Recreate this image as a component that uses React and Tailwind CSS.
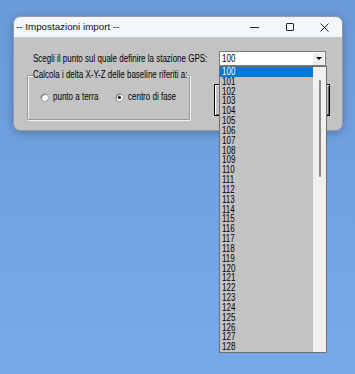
import React from 'react';

const items = Array.from({ length: 29 }, (_, i) => String(100 + i));

// classic dialogs here use a narrow sans; squeeze Liberation Sans to match
const T = ({ children }) => (
    <span className="inline-block whitespace-nowrap origin-left scale-x-[0.8]">{children}</span>
);

const Radio = ({ checked, label }) => (
    <div className="w-[75px] flex items-center gap-[4px]">
        <div className="w-[9px] h-[9px] shrink-0 rounded-full bg-white border border-[#9a9a9a] shadow-[inset_1px_1px_0_#7a7a7a] flex items-center justify-center">
            {checked && <div className="w-[3px] h-[3px] rounded-full bg-black" />}
        </div>
        <T>{label}</T>
    </div>
);

export default function App() {
    return (
        <div className="relative w-[355px] h-[374px] overflow-hidden bg-gradient-to-b from-[#6a9ad8] to-[#78a9e8] font-['Liberation_Sans',Arial,sans-serif] text-[10px] leading-[12px] text-black">
            {/* dialog window */}
            <div className="absolute left-[13px] top-[16px] w-[330px] h-[115px] rounded-[7px] overflow-hidden border border-[#8c9bb0] shadow-[0_2px_8px_rgba(0,0,0,0.25)] flex flex-col">
                <div className="h-[20px] bg-[#f3f6fb] flex items-center shrink-0">
                    <span className="pl-[2px] text-[9.8px] text-[#111] whitespace-nowrap">-- Impostazioni import --</span>
                    <div className="ml-auto flex h-full">
                        <div className="w-[35px] flex items-center justify-center">
                            <div className="w-[9px] h-px bg-[#222]" />
                        </div>
                        <div className="w-[35px] flex items-center justify-center">
                            <div className="w-[8px] h-[8px] border border-[#222] rounded-[1px]" />
                        </div>
                        <div className="w-[35px] flex items-center justify-center">
                            <svg width="9" height="9" viewBox="0 0 9 9">
                                <path d="M0.5 0.5 L8.5 8.5 M8.5 0.5 L0.5 8.5" stroke="#222" strokeWidth="1" />
                            </svg>
                        </div>
                    </div>
                </div>
                <div className="flex-1 bg-[#c3c3c3]">
                    <div className="flex items-center pt-[14px] pl-[19px]">
                        <div className="w-[186px]">
                            <T>Scegli il punto sul quale definire la stazione GPS:</T>
                        </div>
                        <div className="w-[107px] h-[15px] bg-white border border-[#7a7a7a] flex items-center">
                            <span className="pl-[2px] flex-1"><T>100</T></span>
                            <div className="w-[11px] h-[12px] mr-[1px] bg-[#ededed] flex items-center justify-center">
                                <div className="w-0 h-0 border-l-[3px] border-r-[3px] border-t-[3px] border-l-transparent border-r-transparent border-t-black" />
                            </div>
                        </div>
                    </div>
                    <div className="flex items-start mt-[9px] pl-[13px]">
                        <div className="relative w-[163px] h-[45px] shrink-0 border border-[#9a9a9a] shadow-[inset_1px_1px_0_#f4f4f4,1px_1px_0_#f4f4f4] rounded-[1px]">
                            <div className="absolute left-[5px] top-[-7px] w-[154px] bg-[#c3c3c3]">
                                <T>Calcola i delta X-Y-Z delle baseline riferiti a:</T>
                            </div>
                            <div className="flex items-center pt-[15px] pl-[12px]">
                                <Radio label="punto a terra" />
                                <Radio checked label="centro di fase" />
                            </div>
                        </div>
                        <div className="ml-[24px] mt-[9px] w-[116px] h-[32px] shrink-0 border border-black bg-[#c3c3c3] shadow-[inset_1px_1px_0_#fff,inset_-1px_-1px_0_#6a6a6a]" />
                    </div>
                </div>
            </div>

            {/* open combo list */}
            <div className="absolute left-[219px] top-[66px] w-[108px] h-[287px] bg-[#c3c3c3] border border-[#6e6e6e] flex">
                <div className="flex-1 flex flex-col">
                    {items.map((n, i) => (
                        <div
                            key={n}
                            className={`h-[9.83px] leading-[9.83px] pl-[2px] ${i === 0 ? 'bg-[#0078d7] text-white' : ''}`}
                        >
                            <T>{n}</T>
                        </div>
                    ))}
                </div>
                <div className="w-[13px] bg-[#f0f0f0] flex justify-center pt-[13px]">
                    <div className="w-[2px] h-[97px] bg-[#8a8a8a] rounded-full" />
                </div>
            </div>
        </div>
    );
}
